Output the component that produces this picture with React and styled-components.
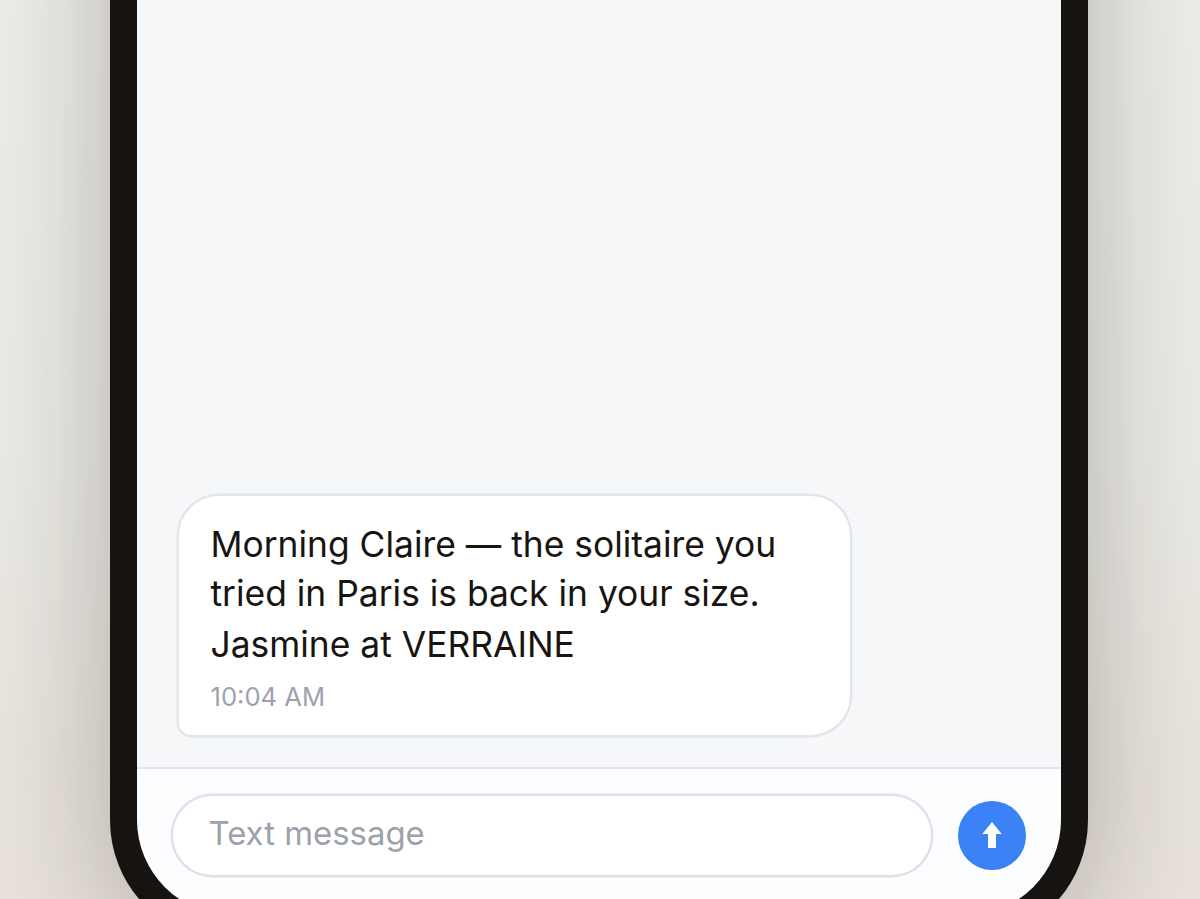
import React from 'react';
import styled, { createGlobalStyle } from 'styled-components';

const GlobalStyle = createGlobalStyle`
  * {
    box-sizing: border-box;
  }

  body {
    margin: 0;
    overflow: hidden;
    font-family: Inter, 'Liberation Sans', sans-serif;
  }
`;

const Page = styled.main`
  display: flex;
  align-items: flex-end;
  height: 899px;
  padding-left: 110px;
  overflow: hidden;
  background: linear-gradient(180deg, #eeede8 0%, #ebeae5 50%, #e8e2da 100%);
`;

const Phone = styled.section`
  display: flex;
  flex-direction: column;
  flex: none;
  width: 977.5px;
  height: 1900px;
  margin-bottom: -43px;
  overflow: hidden;
  border: 27px solid #171310;
  border-radius: 122px;
  background: #171310;
  box-shadow: 0 10px 130px rgba(23, 19, 16, 0.28);
`;

const Thread = styled.div`
  display: flex;
  flex: 1;
  flex-direction: column;
  align-items: flex-start;
  justify-content: flex-end;
  padding: 0 39.5px 30px;
  background: #f5f7f9;
`;

const Bubble = styled.article`
  width: 675.5px;
  height: 243.5px;
  padding: 24.5px 32px 0;
  border: 2px solid #e2e5ea;
  border-radius: 42px 42px 42px 14px;
  background: #fff;
  box-shadow: 0 0 0 0.4px #e2e5ea;
`;

const Message = styled.p`
  margin: 0;
  color: #171412;
  font-size: 35.4px;
  line-height: 49px;
`;

const Signature = styled(Message)`
  margin-top: 2px;
`;

const Time = styled.time`
  display: block;
  margin-top: 11px;
  color: #9ca2ac;
  font-size: 25.6px;
  line-height: 34px;
`;

const Composer = styled.footer`
  display: flex;
  align-items: flex-start;
  gap: 24.5px;
  height: 148px;
  padding: 25px 34.5px 0 34px;
  border-top: 2px solid #e2e5e9;
  background: #fbfdfe;
`;

const Field = styled.div`
  flex: 1;
  height: 83px;
  padding: 0 35.5px;
  border: 2px solid #dee1e8;
  border-radius: 42px;
  background: #fff;
  box-shadow: 0 0 0 0.4px #dee1e8;
  color: #9ca2ab;
  font-size: 32.9px;
  line-height: 74px;
`;

const SendButton = styled.button`
  display: flex;
  align-items: center;
  justify-content: center;
  width: 68.5px;
  height: 68.5px;
  margin-top: 7px;
  padding: 0;
  border: 0;
  border-radius: 50%;
  background: #3b82f6;
`;

const App = () => {
  return (
    <>
      <GlobalStyle />
      <Page>
        <Phone>
          <Thread>
            <Bubble>
              <Message>
                Morning Claire — the solitaire you
                <br />
                tried in Paris is back in your size.
              </Message>
              <Signature>Jasmine at VERRAINE</Signature>
              <Time>10:04 AM</Time>
            </Bubble>
          </Thread>
          <Composer>
            <Field>Text message</Field>
            <SendButton aria-label="Send">
              <svg width="20" height="26" viewBox="0 0 20 26" fill="#fff">
                <path d="M10 0 19.7 12H14V26H6V12H.3Z" />
              </svg>
            </SendButton>
          </Composer>
        </Phone>
      </Page>
    </>
  );
};

export default App;
